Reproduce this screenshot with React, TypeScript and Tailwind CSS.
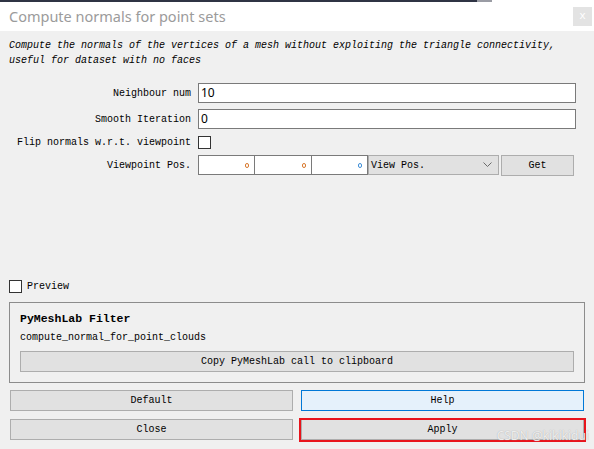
import React from 'react';

const mono = { fontFamily: '"Liberation Mono", "DejaVu Sans Mono", monospace' };

const Dot = ({ color }: { color: string }) => (
  <span className={`absolute right-[5px] top-[7px] w-[4px] h-[5px] rounded-full border ${color}`} />
);

const App = () => {
  return (
    <div className="w-[594px] h-[449px] flex flex-col bg-white overflow-hidden relative text-black" style={mono}>
      {/* top strip */}
      <div className="flex h-[2px]">
        <div className="w-[477px] bg-[#2f3444]" />
        <div className="w-[15px] bg-[#9a9ca4]" />
        <div className="flex-1 bg-white" />
      </div>

      {/* title bar */}
      <div className="h-[29px] flex items-center justify-between pl-[9px] pr-[2px] bg-white">
        <span
          className="text-[14.5px] text-[#9b9b9b]"
          style={{ fontFamily: '"Noto Sans", "Open Sans", sans-serif' }}
        >
          Compute normals for point sets
        </span>
        <div className="w-[19px] h-[19px] bg-[#e3e3e3] flex items-center justify-center text-white text-[11px] leading-none">
          x
        </div>
      </div>

      {/* body */}
      <div className="flex-1 bg-[#f0f0f0] flex flex-col">
        <div className="pl-[9px] pt-[7px] text-[10px] leading-[15px] italic">
          <div>Compute the normals of the vertices of a mesh without exploiting the triangle connectivity,</div>
          <div>useful for dataset with no faces</div>
        </div>

        <div className="flex flex-col mt-[15px] text-[10px]">
          <div className="flex items-center h-[20px]">
            <div className="w-[192px] text-right pr-[1px]">Neighbour num</div>
            <div
              className="ml-[6px] w-[378px] h-[20px] bg-white border border-[#7a7a7a] flex items-center pl-[2px] text-[12px]"
              style={{ fontFamily: '"Noto Sans", "Liberation Sans", sans-serif' }}
            >
              10
            </div>
          </div>
          <div className="flex items-center h-[20px] mt-[6px]">
            <div className="w-[192px] text-right pr-[1px]">Smooth Iteration</div>
            <div
              className="ml-[6px] w-[378px] h-[20px] bg-white border border-[#7a7a7a] flex items-center pl-[2px] text-[12px]"
              style={{ fontFamily: '"Noto Sans", "Liberation Sans", sans-serif' }}
            >
              0
            </div>
          </div>
          <div className="flex items-center h-[15px] mt-[6px]">
            <div className="w-[192px] text-right pr-[1px]">Flip normals w.r.t. viewpoint</div>
            <div className="ml-[6px] w-[13px] h-[13px] bg-white border border-[#333333]" />
          </div>
          <div className="flex items-center h-[20px] mt-[5px]">
            <div className="w-[192px] text-right pr-[1px]">Viewpoint Pos.</div>
            <div className="ml-[6px] flex h-[20px]">
              <div className="relative w-[57px] h-[20px] bg-white border border-[#7a7a7a]">
                <Dot color="border-[#d9792e]" />
              </div>
              <div className="relative w-[58px] h-[20px] bg-white border border-[#7a7a7a] -ml-[1px]">
                <Dot color="border-[#d9792e]" />
              </div>
              <div className="relative w-[57px] h-[20px] bg-white border border-[#7a7a7a] -ml-[1px]">
                <Dot color="border-[#3f8fd8]" />
              </div>
              <div className="w-[131px] h-[20px] bg-[#e1e1e1] border border-[#adadad] flex items-center justify-between pl-[2px] pr-[6px]">
                <span>View Pos.</span>
                <svg width="9" height="6" viewBox="0 0 9 6">
                  <path d="M0.5 0.5 L4.5 4.5 L8.5 0.5" fill="none" stroke="#6b6b6b" strokeWidth="1" />
                </svg>
              </div>
              <div className="ml-[2px] w-[73px] h-[21px] bg-[#e1e1e1] border border-[#adadad] flex items-center justify-center">
                Get
              </div>
            </div>
          </div>
        </div>

        <div className="flex-1" />

        {/* preview */}
        <div className="flex items-center pl-[9px] text-[10px]">
          <div className="w-[13px] h-[13px] bg-white border border-[#333333]" />
          <span className="ml-[5px]">Preview</span>
        </div>

        {/* pymeshlab group */}
        <div className="mx-[9px] mt-[8px] h-[81px] border border-[#8c8c8c] flex flex-col pl-[10px] pr-[10px]">
          <div className="mt-[9px] text-[11.5px] font-bold leading-[14px]">PyMeshLab Filter</div>
          <div className="mt-[5px] text-[10px] leading-[14px]">compute_normal_for_point_clouds</div>
          <div className="mt-[6px] h-[21px] bg-[#e1e1e1] border border-[#adadad] flex items-center justify-center text-[10px]">
            Copy PyMeshLab call to clipboard
          </div>
        </div>

        {/* buttons */}
        <div className="grid grid-cols-2 gap-x-[8px] gap-y-[8px] px-[10px] mt-[7px] mb-[9px] text-[10px]">
          <div className="h-[21px] bg-[#e1e1e1] border border-[#adadad] flex items-center justify-center">Default</div>
          <div className="h-[21px] bg-[#e5f1fb] border border-[#0078d7] flex items-center justify-center">Help</div>
          <div className="h-[21px] bg-[#e1e1e1] border border-[#adadad] flex items-center justify-center">Close</div>
          <div className="relative h-[21px] bg-[#e1e1e1] border border-[#adadad] flex items-center justify-center">
            Apply
            <div className="absolute -left-[3px] -top-[2px] -right-[3px] -bottom-[3px] border-2 border-[#e8141c]" />
          </div>
        </div>
      </div>

      {/* watermark */}
      <div
        className="absolute right-[5px] bottom-[4px] text-[12px] text-white/80"
        style={{ fontFamily: '"Noto Sans", sans-serif', textShadow: '0 0 1px #9a9a9a' }}
      >
        CSDN @kikikidui
      </div>
    </div>
  );
};

export default App;
